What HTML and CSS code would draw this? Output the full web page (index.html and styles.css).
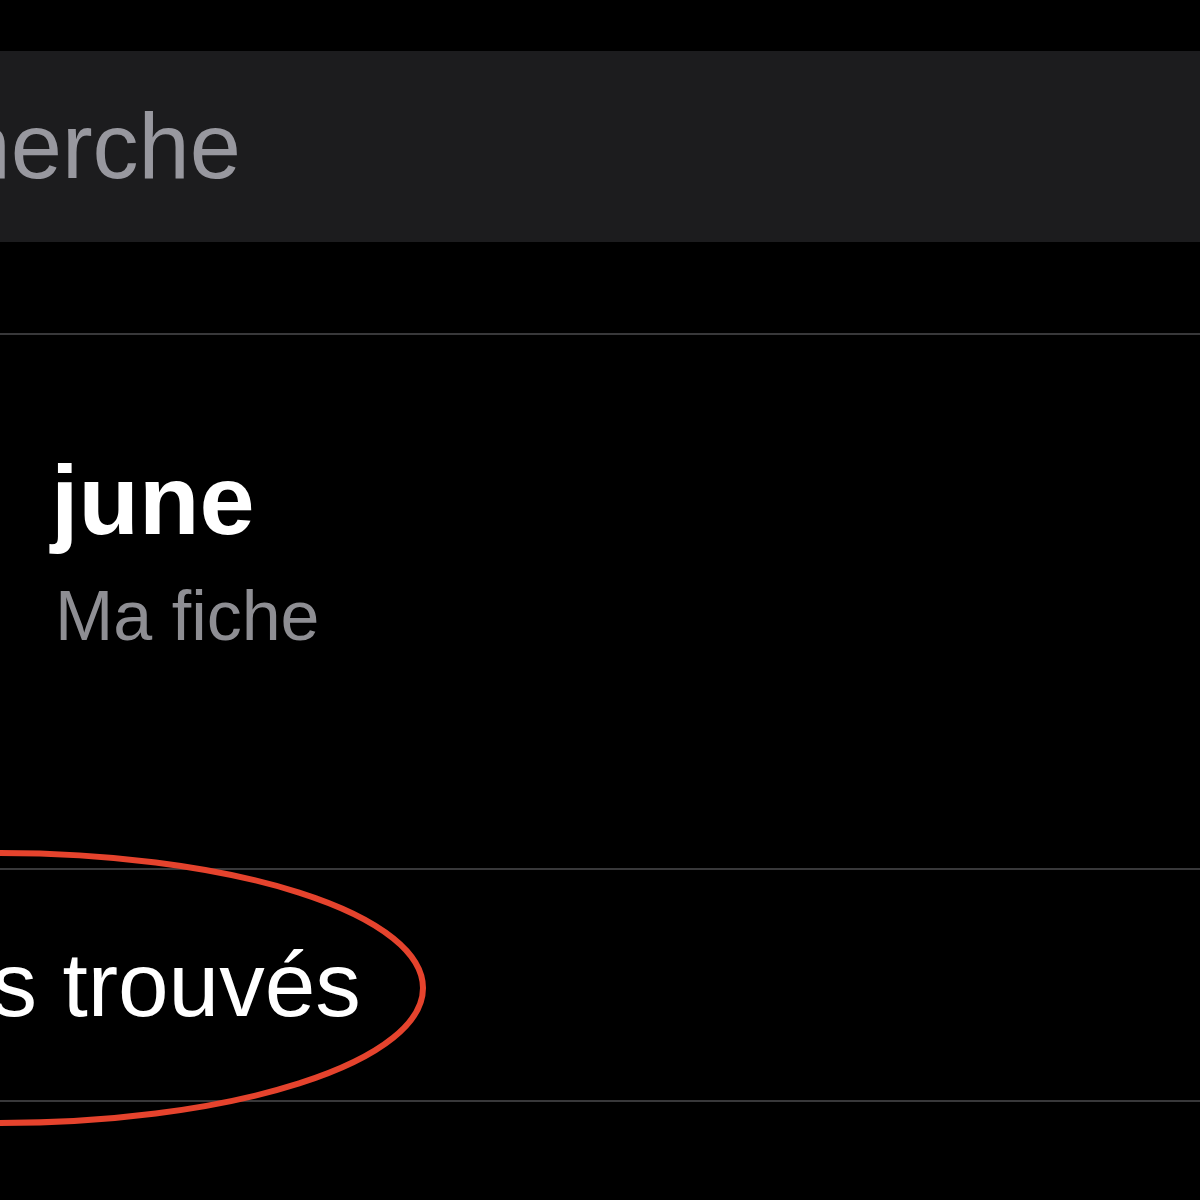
FILE: index.html
```html
<!DOCTYPE html>
<html lang="fr">
<head>
    <meta charset="UTF-8" />
    <meta name="viewport" content="width=device-width, initial-scale=1.0" />
    <title>Contacts</title>
    <link rel="stylesheet" href="styles.css">
</head>
<body>
    <div class="screen">
        <!-- Search field, cropped on the left -->
        <div class="search-bar">
            <span class="search-placeholder">Recherche</span>
        </div>

        <div class="separator"></div>

        <!-- My card -->
        <div class="me-row">
            <div class="me-name">june</div>
            <div class="me-label">Ma fiche</div>
        </div>

        <div class="separator"></div>

        <div class="found-row">
            <span class="found-text">Contacts trouvés</span>
        </div>

        <div class="separator"></div>

        <!-- Red annotation circle drawn over the list -->
        <svg class="annotation" width="1200" height="1200" viewBox="0 0 1200 1200">
            <ellipse cx="0" cy="988" rx="423" ry="135" fill="none" stroke="#e5432d" stroke-width="6" />
        </svg>
    </div>
</body>
</html>
```

FILE: styles.css
```css
/* --- Reset --- */
* {
    margin: 0;
    padding: 0;
    box-sizing: border-box;
}

body {
    background-color: #000;
    color: #fff;
    font-family: "Liberation Sans", Arial, Helvetica, sans-serif;
    overflow: hidden;
}

.screen {
    position: relative;
    width: 1200px;
    height: 1200px;
    padding-top: 51px;
}

/* --- Search bar --- */
.search-bar {
    height: 191px;
    background-color: #1c1c1e;
    padding-top: 1px;
    white-space: nowrap;
    overflow: hidden;
    margin-bottom: 91px;
}

.search-placeholder {
    display: block;
    margin-left: -204px;
    font-size: 92px;
    line-height: 188px;
    color: #98989f;
}

/* --- List separators --- */
.separator {
    height: 2px;
    background-color: #38383a;
}

/* --- My card row --- */
.me-row {
    height: 533px;
    padding-top: 105px;
}

.me-name {
    padding-left: 51px;
    font-size: 99px;
    line-height: 120px;
    font-weight: bold;
}

.me-label {
    margin-top: 14px;
    padding-left: 55px;
    font-size: 70px;
    line-height: 84px;
    color: #8e8e93;
}

/* --- Found contacts row --- */
.found-row {
    height: 230px;
    white-space: nowrap;
    overflow: hidden;
}

.found-text {
    display: block;
    margin-left: -322px;
    font-size: 91px;
    line-height: 230px;
}

/* --- Annotation overlay --- */
.annotation {
    position: absolute;
    top: 0;
    left: 0;
    pointer-events: none;
}
```
